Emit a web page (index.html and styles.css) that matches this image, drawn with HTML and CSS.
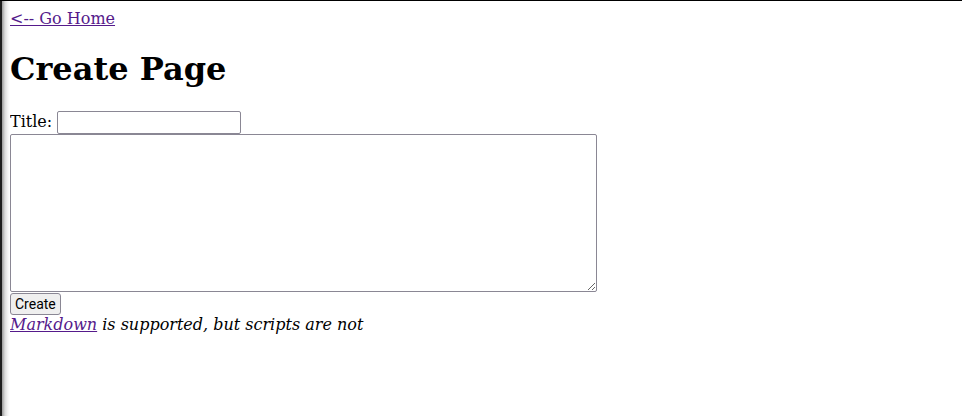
FILE: index.html
```html
<!DOCTYPE html>
<html>
<head>
<meta charset="utf-8">
<title>Create Page</title>
<link rel="stylesheet" href="styles.css">
</head>
<body>
<a class="home" href="#">&lt;-- Go Home</a>
<h1 class="heading">Create Page</h1>
<form class="create-form">
<label class="title-label">Title: <input class="title-input" type="text"></label><br>
<textarea class="body-input"></textarea><br>
<button class="create-btn" type="button">Create</button>
</form>
<em class="note"><a href="#">Markdown</a> is supported, but scripts are not</em>
</body>
</html>
```
FILE: styles.css
```css
html {
  padding: 1px 0 0 2px;
  min-height: 100%;
  box-sizing: border-box;
  background:
    linear-gradient(#000, #000) top left / 100% 1px no-repeat,
    linear-gradient(to right, #1e1e1e 0, #1e1e1e 2px, #9a9a9a 2px, #dcdcdc 5px, #f6f6f6 8px, #fff 10px) left top / 12px 100% no-repeat,
    #fff;
}
body {
  margin: 8px;
  font-family: "DejaVu Serif", serif;
  font-size: 16px;
  color: #000;
}
a { color: #551a8b; }
.heading {
  font-size: 2em;
  margin: calc(0.67em + 1px) 0 calc(0.67em + 1px);
}
.create-form { margin: 0; }
.title-input {
  width: 184px;
  height: 23px;
  box-sizing: border-box;
  border: 1px solid #8a8794;
  border-radius: 2px;
  padding: 1px 2px;
  background: #fff;
}
.body-input {
  width: 587px;
  height: 158px;
  box-sizing: border-box;
  vertical-align: bottom;
  border: 1px solid #8a8794;
  border-radius: 2px;
  background: #fff;
  margin-bottom: 1px;
}
.create-btn {
  font-family: Roboto, "Noto Sans", sans-serif;
  font-size: 14px;
  height: 22px;
  box-sizing: border-box;
  padding: 0 4px;
  border: 1px solid #8a8794;
  border-radius: 3px;
  background: #efefef;
  color: #000;
  line-height: 20px;
  vertical-align: bottom;
}
```
